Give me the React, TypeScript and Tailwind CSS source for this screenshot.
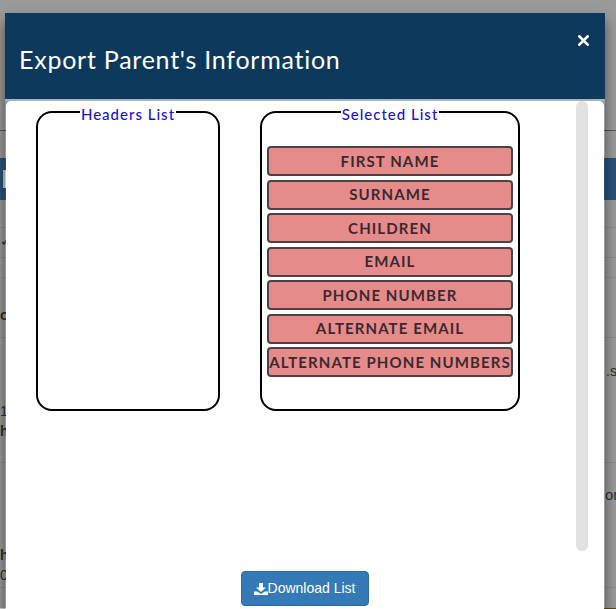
import { X } from "lucide-react";

const selectedHeaders = [
  "First Name",
  "Surname",
  "Children",
  "Email",
  "Phone Number",
  "Alternate Email",
  "Alternate Phone Numbers",
];

function ListBox({ title, width, items = [] }: { title: string; width: string; items?: string[] }) {
  return (
    <fieldset className={`h-[308px] rounded-[16px] border-2 border-black px-[5px] pt-[25px] ${width}`}>
      <legend className="mx-auto px-[1px] pt-[4px] text-center text-[15px] leading-[14px] font-medium tracking-[1px] text-[#1a12d6]">
        {title}
      </legend>
      <div className="flex flex-col gap-[3.5px]">
        {items.map((item) => (
          <div
            key={item}
            className="flex h-[30px] items-center justify-center rounded-[4px] border-2 border-[#4f4247] bg-[#e78a8a] text-[15px] font-bold tracking-[1.1px] whitespace-nowrap text-[#3a2a30] uppercase"
          >
            {item}
          </div>
        ))}
      </div>
    </fieldset>
  );
}

function DownloadIcon() {
  return (
    <svg viewBox="0 0 14 14" className="h-[14px] w-[14px]" fill="currentColor">
      <path d="M5 1h4v4.5h3L7 10 2 5.5h3z" />
      <path d="M0 9.5h3.2L7 12l3.8-2.5H14V13H0z" />
    </svg>
  );
}

// the page behind the dialog, dimmed
function BackgroundPage() {
  return (
    <div className="flex h-[609px] flex-col bg-[#9a9a9a] font-['Liberation_Sans',sans-serif] text-[14px] leading-[20px] text-[#2e2e2e]">
      <div className="h-[131px] shrink-0 border-b border-[#4c5560]" />
      <div className="h-[27px] shrink-0" />
      <div className="flex h-[42px] shrink-0 items-center bg-[#2a5378]">
        <div className="ml-[3px] h-[18px] w-[3px] bg-[#c4ccd3]" />
      </div>
      <div className="h-[28px] shrink-0 border-b border-[#8a8a8a]" />
      <div className="h-[30px] shrink-0 border-b border-[#8a8a8a] pt-[3px] text-right">
        <div className="w-[6px] overflow-hidden">✓</div>
      </div>
      <div className="h-[20px] shrink-0 border-b border-[#8f8f8f]" />
      <div className="h-[60px] shrink-0 border-b border-[#8a8a8a] pt-[27px]">
        <div className="w-[6px] overflow-hidden font-bold">o</div>
      </div>
      <div className="flex h-[125px] shrink-0 justify-between border-b border-[#8a8a8a]">
        <div className="w-[6px] overflow-hidden pt-[63px] text-right">
          <div>1</div>
          <div className="font-bold">h</div>
        </div>
        <div className="w-[10px] overflow-hidden pt-[23px]">.s</div>
      </div>
      <div className="flex h-[125px] shrink-0 justify-between border-b border-[#8a8a8a]">
        <div className="w-[6px] overflow-hidden pt-[82px] text-right">
          <div className="font-bold">h</div>
          <div>0</div>
        </div>
        <div className="w-[11px] overflow-hidden pt-[22px] text-[15px] whitespace-nowrap">om</div>
      </div>
      <div className="flex-1" />
      <div className="flex h-[1px] shrink-0">
        <div className="w-[30px] bg-[#d8d8d8]" />
        <div className="flex-1 bg-[#5c4b10]" />
      </div>
    </div>
  );
}

export default function App() {
  return (
    <div className="relative h-[609px] w-[616px] overflow-hidden font-['Lato',sans-serif]">
      <BackgroundPage />

      <div className="absolute top-[13px] left-[5px] flex h-[596px] w-[600px] flex-col shadow-[0_8px_12px_rgba(0,0,0,0.5)]">
        <header className="flex h-[86px] shrink-0 items-start justify-between bg-[#0d3a5c] pr-[13px] pl-[14px] text-white">
          <h1 className="mt-[31px] text-[25px] leading-[30px] font-normal tracking-[0.75px]">Export Parent's Information</h1>
          <X className="mt-[19px] h-[17px] w-[17px]" strokeWidth={3.5} />
        </header>
        <div className="h-[2px] shrink-0 bg-[#a9b3ba]" />

        <div className="mx-[1px] flex min-h-0 flex-1 rounded-t-[5px] bg-white">
          <div className="flex min-w-0 flex-1 flex-col">
            <div className="flex items-start gap-[40px] pt-[2px] pl-[30px]">
              <ListBox title="Headers List" width="w-[184px]" />
              <ListBox title="Selected List" width="w-[260px]" items={selectedHeaders} />
            </div>
            <div className="mt-auto mb-[3px] flex justify-center pl-[27px]">
              <button className="flex h-[35px] w-[128px] items-center justify-center rounded-[4px] border border-[#2e6da4] bg-[#337ab7] font-['Liberation_Sans',sans-serif] text-[14px] text-white">
                <DownloadIcon />
                Download List
              </button>
            </div>
          </div>
          <div className="mr-[16px] h-[450px] w-[12px] shrink-0 rounded-[6px] bg-[#e2e2e2]" />
        </div>
      </div>
    </div>
  );
}
